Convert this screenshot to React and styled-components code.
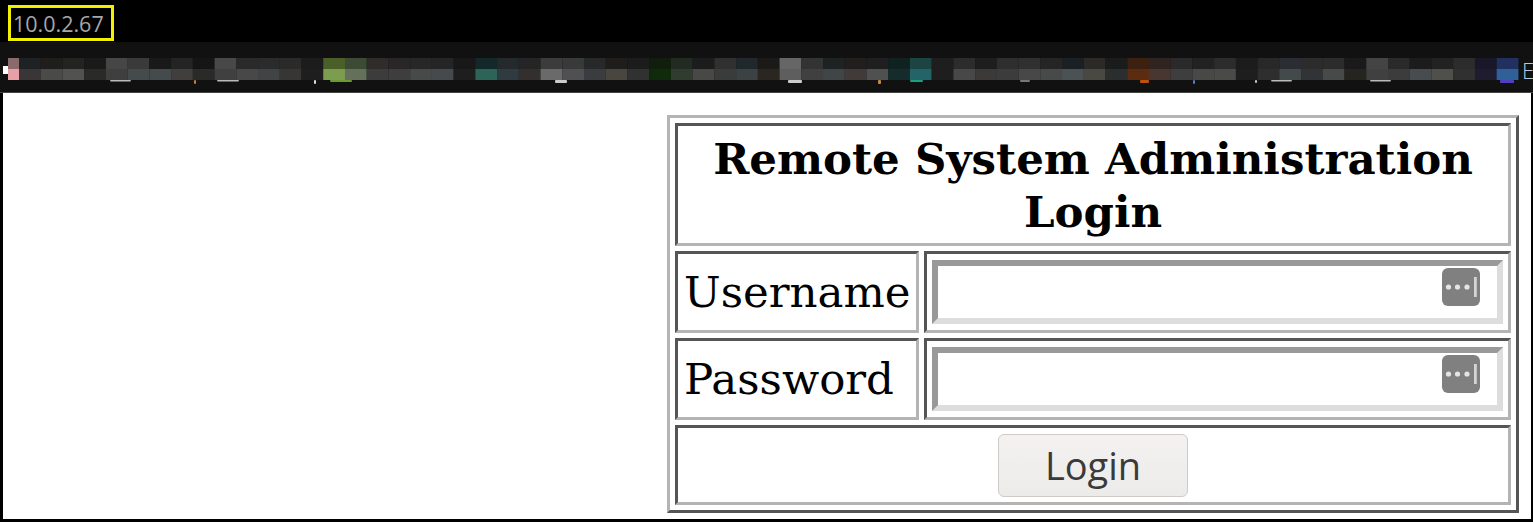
import React from "react";
import styled, { createGlobalStyle } from "styled-components";

const GlobalStyle = createGlobalStyle`
  html, body {
    margin: 0;
    padding: 0;
    background: #000;
  }
`;

// blurred bookmarks strip, two rows of 21.73px blocks starting at x=19
const topRow = [
  "#1e2224", "#1f1e1c", "#232322", "#1a1a1a", "#464646", "#3a3a3a", "#191919", "#242424",
  "#151515", "#484848", "#2a2a2a", "#2a2c2c", "#2a2a28", "#1c1c1c", "#4a6028", "#3c4c34",
  "#2f2c2c", "#282626", "#272727", "#252525", "#181818", "#14282a", "#24292c", "#252525",
  "#3c3c3c", "#383a3a", "#26282a", "#1f1e1c", "#1c1c1c", "#0f1f0c", "#222a22", "#1c1c1c",
  "#303030", "#20282c", "#1c1a18", "#666666", "#333333", "#1e2222", "#221e1e", "#1f1f1f",
  "#0f2220", "#1c4442", "#1e1e1e", "#2c2c2c", "#1e1e1e", "#2e2e2e", "#303030", "#252525",
  "#1a2024", "#2c2a26", "#1a1c1c", "#3c2010", "#302420", "#2a2a2a", "#222222", "#2c2c2c",
  "#1c1c1c", "#282828", "#2a2e32", "#2c2c2c", "#2c2c2c", "#1a1a1a", "#444444", "#2a2a2a",
  "#1c1c1c", "#222222", "#2c2c2c", "#181828", "#223060",
];
const bottomRow = [
  "#3a3638", "#4a4a48", "#525250", "#2a2a28", "#3f3f3f", "#454b4b", "#454a4c", "#403f3d",
  "#2a2a28", "#404040", "#484848", "#404444", "#383634", "#1e1e1e", "#7c9c50", "#64705a",
  "#3c3c3c", "#3e3e3e", "#484a4a", "#464a4c", "#1e1e1e", "#2c6458", "#2f3b40", "#322f2e",
  "#6a6a6a", "#505052", "#3a3c40", "#48463f", "#303232", "#102a0c", "#303c30", "#484846",
  "#3a3c3c", "#3c4244", "#2c2620", "#5e5e5e", "#404040", "#404646", "#403a38", "#505050",
  "#162c2c", "#246468", "#1e1e1e", "#484848", "#3c3a38", "#3c3c3c", "#484848", "#484a4a",
  "#4a5254", "#4a4842", "#2a2e2e", "#5c2c10", "#483630", "#3e3e3e", "#484846", "#4a4a48",
  "#1e1e1e", "#2e2e2e", "#444a4c", "#303436", "#484a4a", "#26241f", "#404040", "#3c3c3c",
  "#464c50", "#50504a", "#303030", "#201c30", "#306098",
];
const marks = [
  [110, 21, 1.5, "#bbbbbb"], [194, 2, 4, "#c08040"], [217, 22, 1.5, "#bbbbbb"], [314, 2, 4, "#dddddd"],
  [330, 22, 2, "#6a9a30"], [555, 12, 3, "#cccccc"], [788, 14, 3, "#cccccc"], [878, 3, 4, "#c08a40"],
  [910, 13, 2, "#18a080"], [1020, 10, 2, "#777777"], [1140, 9, 3, "#c05010"], [1193, 2, 4, "#5080c0"],
  [1255, 2, 3, "#cccccc"], [1271, 21, 1.5, "#bbbbbb"], [1370, 21, 1.5, "#bbbbbb"], [1500, 14, 3, "#5040c0"],
];

const Frame = styled.div`
  width: 1533px;
  height: 522px;
  box-sizing: border-box;
  padding: 0 2px 3px 3px;
  display: flex;
  flex-direction: column;
  background: #000;
  overflow: hidden;
`;

const AddressBar = styled.div`
  height: 42px;
  margin-left: -3px;
  padding: 5px 0 0 8px;
  box-sizing: border-box;
`;

const HostBox = styled.div`
  width: 106px;
  height: 36px;
  box-sizing: border-box;
  border: 3px solid #f2f200;
  padding-left: 2px;
  font: 21.5px/31px "Open Sans", sans-serif;
  color: #a6a6a6;
`;

const BookmarksBar = styled.div`
  height: 51px;
  margin: 0 -2px 0 -3px;
  display: flex;
  background: #111;
  border-bottom: 1px solid #444;
  box-sizing: border-box;
`;

const BlurredLinks = styled.svg`
  width: 1520px;
  height: 50px;
  flex: none;
  filter: blur(0.6px);
`;

const MoreLabel = styled.span`
  font: 22px/56px "Open Sans", sans-serif;
  font-weight: 300;
  color: #b4c8dc;
  margin-left: 2px;
`;

const Page = styled.main`
  flex: 1;
  min-height: 0;
  background: #fff;
  display: flex;
  justify-content: flex-end;
  align-items: flex-start;
  padding: 22px 12px 0 0;
`;

const LoginTable = styled.table`
  width: 852px;
  height: 398px;
  table-layout: fixed;
  border-collapse: separate;
  border-spacing: 5px;
  border: 3px solid;
  border-color: #b4b4b4 #555 #555 #b4b4b4;
  font-family: "DejaVu Serif", serif;
  color: #000;
`;

const LabelColumn = styled.col`
  width: 244px;
`;

const Cell = styled.td`
  padding: 0;
  box-sizing: border-box;
  height: ${(p) => p.$h || 82}px;
  border: 3px solid;
  border-color: #555 #b4b4b4 #b4b4b4 #555;
  text-align: ${(p) => (p.$center ? "center" : "left")};
`;

const LabelCell = styled(Cell)`
  padding-left: 6px;
  font-size: 43.5px;
  white-space: nowrap;
`;

const Title = styled.th`
  height: 123px;
  padding: 0 20px;
  box-sizing: border-box;
  border: 3px solid;
  border-color: #555 #b4b4b4 #b4b4b4 #555;
  font-size: 43.5px;
  line-height: 53px;
`;

const InputWrap = styled.div`
  position: relative;
  height: 64px;
  margin: 0 5px;
`;

const TextInput = styled.input`
  display: block;
  width: 100%;
  height: 100%;
  box-sizing: border-box;
  border: 6px solid;
  border-color: #999 #ddd #ddd #999;
  background: #fff;
  outline: none;
`;

const KeyIcon = styled.svg`
  position: absolute;
  top: 8px;
  right: 23px;
  width: 38px;
  height: 38px;
`;

const LoginButton = styled.button`
  display: block;
  margin: 0 auto;
  width: 190px;
  height: 63px;
  box-sizing: border-box;
  border: 1px solid #cfcac6;
  border-radius: 6px;
  background: linear-gradient(#f3f2f1, #ecebea);
  font: 38px/58px "Open Sans", sans-serif;
  color: #3a3a3a;
  padding: 0;
`;

function Field({ type }) {
  return (
    <InputWrap>
      <TextInput type={type} />
      <KeyIcon viewBox="0 0 38 38">
        <rect width="38" height="38" rx="6" fill="#808080" />
        <circle cx="6.5" cy="19" r="2.6" fill="#e4e4e4" />
        <circle cx="15.5" cy="19" r="2.6" fill="#e4e4e4" />
        <circle cx="25" cy="19" r="2.6" fill="#e4e4e4" />
        <rect x="32" y="9" width="2.8" height="20" fill="#d4d4d4" />
      </KeyIcon>
    </InputWrap>
  );
}

export default function App() {
  return (
    <>
      <GlobalStyle />
      <Frame>
        <AddressBar>
          <HostBox>10.0.2.67</HostBox>
        </AddressBar>
        <BookmarksBar>
          <BlurredLinks viewBox="0 0 1520 50">
            <rect x="8" y="16" width="11" height="11" fill="#8a6a6a" />
            <rect x="8" y="27" width="11" height="11" fill="#e8a0a8" />
            <rect x="3" y="24" width="5" height="8" fill="#fff" />
            {topRow.map((c, i) => (
              <rect key={i} x={19 + i * 21.73} y="16" width="21.8" height="11" fill={c} />
            ))}
            {bottomRow.map((c, i) => (
              <rect key={i} x={19 + i * 21.73} y="27" width="21.8" height="11" fill={c} />
            ))}
            {marks.map(([x, w, h, c], i) => (
              <rect key={i} x={x} y="38" width={w} height={h} rx="1" fill={c} />
            ))}
          </BlurredLinks>
          <MoreLabel>E</MoreLabel>
        </BookmarksBar>
        <Page>
          <form onSubmit={(e) => e.preventDefault()}>
            <LoginTable>
              <colgroup>
                <LabelColumn />
                <col />
              </colgroup>
              <tbody>
                <tr>
                  <Title colSpan={2}>Remote System Administration Login</Title>
                </tr>
                <tr>
                  <LabelCell>Username</LabelCell>
                  <Cell>
                    <Field type="text" />
                  </Cell>
                </tr>
                <tr>
                  <LabelCell>Password</LabelCell>
                  <Cell>
                    <Field type="password" />
                  </Cell>
                </tr>
                <tr>
                  <Cell colSpan={2} $center $h={80}>
                    <LoginButton type="submit">Login</LoginButton>
                  </Cell>
                </tr>
              </tbody>
            </LoginTable>
          </form>
        </Page>
      </Frame>
    </>
  );
}
